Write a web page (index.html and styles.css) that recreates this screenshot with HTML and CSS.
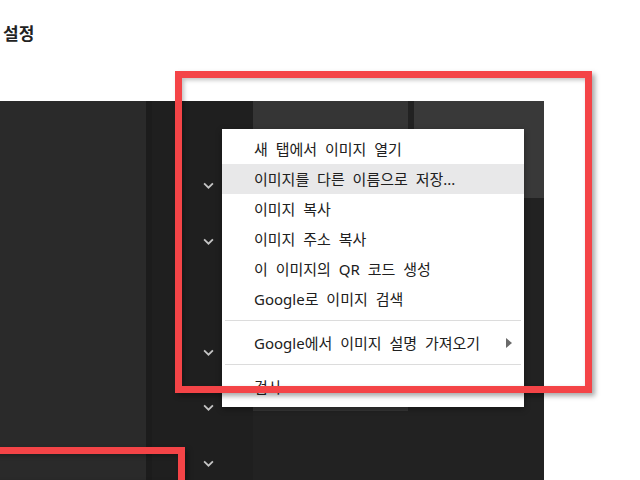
FILE: index.html
```html
<!DOCTYPE html>
<html lang="ko">
<head>
  <meta charset="UTF-8">
  <title>설정</title>
  <link rel="stylesheet" href="styles.css">
</head>
<body>
  <h1 class="title">설정</h1>

  <div class="panel">
    <div class="col-side"></div>
    <div class="col-edge"></div>
    <div class="col-toggles">
      <div class="toggle-row"><svg class="chevron" viewBox="0 0 10 6"><path d="M1 1l4 4 4-4"/></svg></div>
      <div class="toggle-row"><svg class="chevron" viewBox="0 0 10 6"><path d="M1 1l4 4 4-4"/></svg></div>
      <div class="toggle-row"></div>
      <div class="toggle-row"><svg class="chevron" viewBox="0 0 10 6"><path d="M1 1l4 4 4-4"/></svg></div>
      <div class="toggle-row"><svg class="chevron" viewBox="0 0 10 6"><path d="M1 1l4 4 4-4"/></svg></div>
      <div class="toggle-row"><svg class="chevron" viewBox="0 0 10 6"><path d="M1 1l4 4 4-4"/></svg></div>
    </div>
    <div class="col-thumb"><div class="thumb"></div></div>
    <div class="col-extra"><div class="extra-block"></div></div>
  </div>

  <!-- context menu -->
  <ul class="menu">
    <li class="menu-item">새 탭에서 이미지 열기</li>
    <li class="menu-item hover">이미지를 다른 이름으로 저장...</li>
    <li class="menu-item">이미지 복사</li>
    <li class="menu-item">이미지 주소 복사</li>
    <li class="menu-item">이 이미지의 QR 코드 생성</li>
    <li class="menu-item">Google로 이미지 검색</li>
    <li class="menu-sep"></li>
    <li class="menu-item has-sub">Google에서 이미지 설명 가져오기<span class="sub-arrow"></span></li>
    <li class="menu-sep"></li>
    <li class="menu-item">검사</li>
  </ul>

  <!-- annotation boxes -->
  <div class="mark mark-menu"></div>
  <div class="mark mark-bottom"></div>
</body>
</html>
```

FILE: styles.css
```css
html, body {
  overflow: hidden;
}
body {
  margin: 0;
  height: 480px;
  background-color: #fff;
  font-family: "Noto Sans", "Noto Sans CJK KR", sans-serif;
}
.title {
  margin: 0;
  padding: 20px 3px 0;
  height: 101px;
  box-sizing: border-box;
  font-size: 17px;
  font-weight: bold;
  color: #222;
}
.panel {
  display: flex;
  width: 544px;
  height: 379px;
  background-color: #222;
}
.col-side {
  width: 146px;
  background-color: #2a2a2a;
}
.col-edge {
  width: 6px;
  background-color: #1c1c1c;
}
.col-toggles {
  width: 101px;
  padding-top: 57px;
  background-color: #1f1f1f;
}
.toggle-row {
  height: 55.5px;
  display: flex;
  align-items: center;
  padding-left: 51px;
}
.chevron {
  width: 11px;
  height: 7px;
  fill: none;
  stroke: #c4c4c4;
  stroke-width: 1.6;
}
.col-thumb {
  width: 155px;
}
.thumb {
  height: 310px;
  background-color: #353535;
}
.col-extra {
  width: 130px;
  margin-left: 6px;
}
.extra-block {
  height: 97px;
  background-color: #393939;
}
.menu {
  position: absolute;
  left: 222px;
  top: 129px;
  width: 302px;
  margin: 0;
  padding: 5px 0;
  list-style: none;
  background-color: #fff;
  box-shadow: 0 2px 6px rgba(0, 0, 0, 0.35);
  box-sizing: border-box;
}
.menu-item {
  position: relative;
  height: 30px;
  line-height: 30px;
  padding-left: 32px;
  font-size: 15px;
  color: #202020;
  word-spacing: 4px;
  white-space: nowrap;
}
.menu-item.hover {
  background-color: #e8e8e9;
}
.menu-sep {
  height: 1px;
  margin: 6px 3px 7px;
  background-color: #dcdcdc;
}
.sub-arrow {
  position: absolute;
  right: 12px;
  top: 10px;
  border-left: 6px solid #6a6a6a;
  border-top: 5px solid transparent;
  border-bottom: 5px solid transparent;
}
.mark {
  position: absolute;
  border: 7px solid #f44447;
  box-shadow: 3px 3px 5px rgba(0, 0, 0, 0.35), inset 2px 2px 4px rgba(0, 0, 0, 0.25);
}
.mark-menu {
  left: 175px;
  top: 71px;
  width: 403px;
  height: 308px;
}
.mark-bottom {
  left: -20px;
  top: 447px;
  width: 191px;
  height: 26px;
  border-bottom: none;
}
```
